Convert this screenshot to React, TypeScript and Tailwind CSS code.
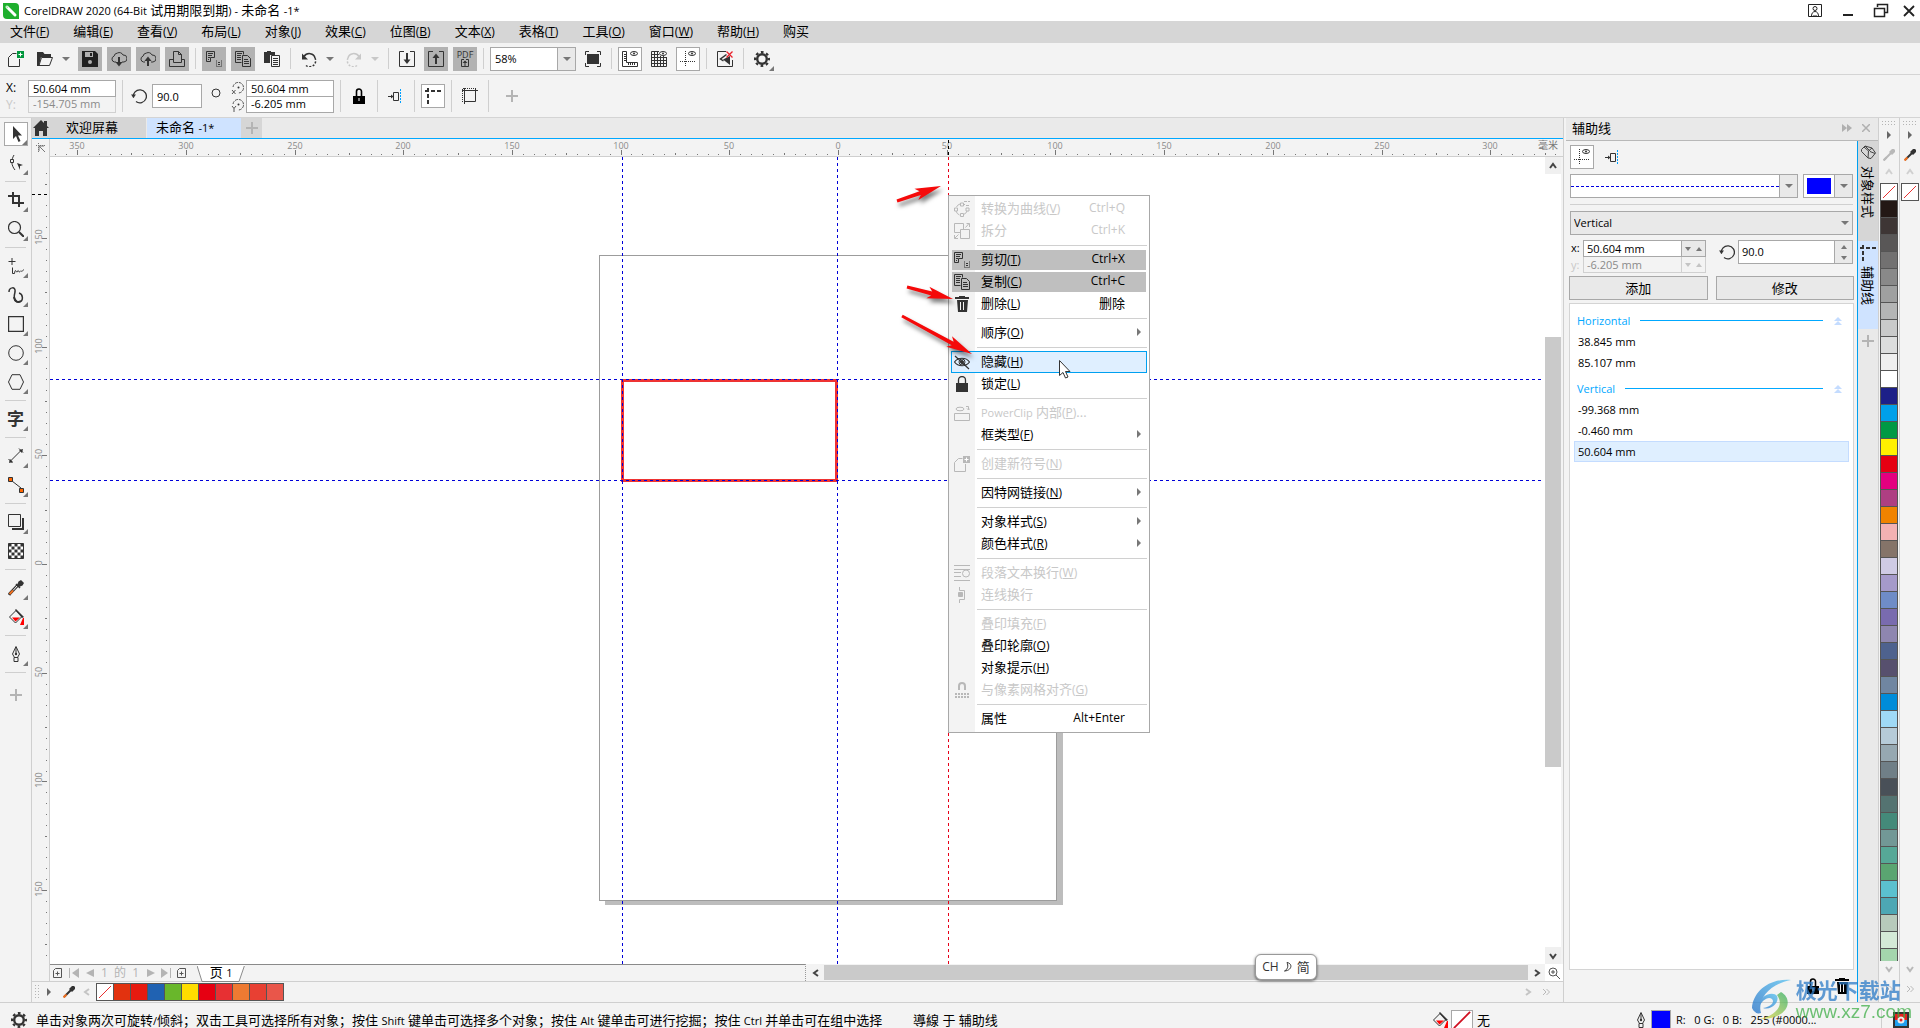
import React from "react";

type Kids = { children?: React.ReactNode };

/* ---------- text helpers ---------- */

/* Chinese runs keep the 13px size of the parent, Latin runs are set smaller beside them. */
function Mixed({ text }: { text: string }) {
  const parts = text.split(/([\x21-\x7e][\x20-\x7e]*[\x21-\x7e]|[\x21-\x7e])/);
  return (
    <span className="whitespace-pre">
      {parts.map((p, i) =>
        i % 2 === 1 ? (
          <span key={i} className="text-[11px]">
            {p}
          </span>
        ) : (
          p
        ),
      )}
    </span>
  );
}

function Mnemonic({ label, k }: { label: string; k?: string }) {
  return (
    <>
      <Mixed text={label} />
      {k && (
        <span className="text-[12px]">
          (<u className="underline-offset-1">{k}</u>)
        </span>
      )}
    </>
  );
}

/* ---------- icons ---------- */

function Ico({ children, s = 16, className = "" }: Kids & { s?: number; className?: string }) {
  return (
    <svg
      width={s}
      height={s}
      viewBox={`0 0 ${s} ${s}`}
      fill="none"
      stroke="currentColor"
      className={`shrink-0 ${className}`}
      aria-hidden="true"
    >
      {children}
    </svg>
  );
}

const Down = ({ className = "" }: { className?: string }) => (
  <svg width="8" height="4" viewBox="0 0 8 4" className={`shrink-0 ${className}`} aria-hidden="true">
    <path d="M0 0h8L4 4z" fill="currentColor" />
  </svg>
);
const Tri = ({ className = "" }: { className?: string }) => (
  <svg width="4" height="8" viewBox="0 0 4 8" className={`shrink-0 ${className}`} aria-hidden="true">
    <path d="M0 0l4 4l-4 4z" fill="currentColor" />
  </svg>
);
const Chevron = ({ d, className = "" }: { d: string; className?: string }) => (
  <svg width="8" height="8" viewBox="0 0 8 8" fill="none" stroke="currentColor" strokeWidth="2" className={`shrink-0 ${className}`} aria-hidden="true">
    <path d={d} />
  </svg>
);
const UP = "M1 6l3-4l3 4";
const DOWN = "M1 2l3 4l3-4";
const LEFT = "M6 1l-4 3l4 3";
const RIGHT = "M2 1l4 3l-4 3";

const Plus = () => (
  <Ico s={12} className="text-[#b4b4b4]">
    <path d="M6 0v12M0 6h12" strokeWidth="2" />
  </Ico>
);
const IcNew = () => (
  <Ico>
    <path d="M11.5 8v7.5h-11v-9l4-4h4" />
    <rect x="9" y="0" width="7" height="7" fill="#00963c" stroke="none" />
    <path d="M12.5 1.5v4M10.5 3.5h4" stroke="#fff" />
  </Ico>
);
const IcOpen = () => (
  <Ico>
    <path d="M0 1h6l1.500 2H14v3H4L2 15H0z" fill="currentColor" stroke="none" />
    <path d="M4.500 6.500h11l-3 8h-10.500z" />
  </Ico>
);
const IcSave = () => (
  <Ico>
    <path d="M0 0h13l3 3v13H0z" fill="#222" stroke="none" />
    <path d="M3 1h8v5H3z" fill="#b2b2b2" stroke="none" />
    <path d="M8 2h2v3H8z" fill="#222" stroke="none" />
    <circle cx="8" cy="11" r="2" fill="#b2b2b2" stroke="none" />
  </Ico>
);
const CLOUD = "M5 11H3.500A3 3 0 0 1 3 5.200A4 4 0 0 1 6.500 2A4 4 0 0 1 12 4A3.400 3.400 0 0 1 13 11h-2";
const IcCloudDown = () => (
  <Ico>
    <path d={CLOUD} />
    <path d="M8 6v6" strokeWidth="2" />
    <path d="M4.500 11h7L8 15.500z" fill="currentColor" stroke="none" />
  </Ico>
);
const IcCloudUp = () => (
  <Ico>
    <path d={CLOUD} />
    <path d="M8 9v6" strokeWidth="2" />
    <path d="M4.500 10h7L8 5.500z" fill="currentColor" stroke="none" />
  </Ico>
);
const IcPrint = () => (
  <Ico>
    <path d="M4.500 11.500V.5h5l3 3v8zM4 8.500H.5v7h15v-7H13" />
    <path d="M9.500 .5v3h3" />
  </Ico>
);
const IcCut = () => (
  <Ico>
    <path d="M.5 .5h8v6h-4v4h-4zM2 2.500h5M2 4.500h4M2 6.500h2M2 8.500h1" />
    <path d="M10.500 9.500v6h5v-6" strokeDasharray="1 1" />
    <path d="M12 11.500h2M12 13.500h2" />
  </Ico>
);
const IcCopy = () => (
  <Ico>
    <path d="M6.500 11.500h-6V.5h8v3M2 2.500h5M2 4.500h4M2 6.500h4M2 8.500h4" />
    <path d="M7.500 4.500h5l3 3v8h-8zM9 8.500h4M9 10.500h5M9 12.500h5" />
  </Ico>
);
const IcPaste = () => (
  <Ico>
    <path d="M0 1h3V0h4v1h4v3H6v8H0z" fill="#333" stroke="none" />
    <path d="M7.500 4.500h8v11h-8zM9 7.500h5M9 9.500h5M9 11.500h5M9 13.500h5" fill="#f3f3f3" />
  </Ico>
);
const UNDO = (
  <>
    <path d="M3 5.500C6 1 13 2 14 7" strokeWidth="1.500" />
    <path d="M14 7a6 6 0 0 1-9 7.500" strokeDasharray="2 1.500" strokeWidth="1.500" />
    <path d="M1 2.500v6h6z" fill="currentColor" stroke="none" />
  </>
);
const IcUndo = () => <Ico>{UNDO}</Ico>;
const IcRedo = () => (
  <Ico>
    <g transform="matrix(-1 0 0 1 16 0)">{UNDO}</g>
  </Ico>
);
const IcImport = () => (
  <Ico>
    <path d="M5 .5H.5v15h15V.5H11" />
    <path d="M8 2v8" strokeWidth="2" />
    <path d="M4.500 8.500h7L8 13z" fill="currentColor" stroke="none" />
  </Ico>
);
const IcExport = () => (
  <Ico>
    <path d="M5 .5H.5v15h15V.5H11" />
    <path d="M8 5v8" strokeWidth="2" />
    <path d="M4.500 7h7L8 2.500z" fill="currentColor" stroke="none" />
  </Ico>
);
const IcPdf = () => (
  <span className="flex flex-col items-center">
    <span className="text-[9px] leading-[9px]">PDF</span>
    <Ico s={8}>
      <path d="M3 .5H.5v7h7v-7H5M4 2v5" />
      <path d="M1.500 4h5L4 1.500z" fill="currentColor" stroke="none" />
    </Ico>
  </span>
);
const IcFull = () => (
  <Ico>
    <path d="M.5 4V.5H4M12 .5h3.500V4M15.500 12v3.500H12M4 15.500H.5V12" />
    <rect x="2" y="3" width="12" height="10" fill="currentColor" stroke="none" />
  </Ico>
);
const Eye = () => (
  <>
    <ellipse cx="12" cy="2.500" rx="3.500" ry="2" fill="#f9f9f9" />
    <circle cx="12" cy="2.500" r="1" fill="currentColor" stroke="none" />
  </>
);
const IcRuler = () => (
  <Ico>
    <path d="M.5 .5h4v11h11v4H.5zM2 3.500h2M2 5.500h2M2 7.500h2M2 9.500h2M6.500 12v2M8.500 12v2M10.500 12v2M12.500 12v2" />
    <Eye />
  </Ico>
);
const IcGrid = () => (
  <Ico>
    <path d="M.5 .5v15h15V6M.5 .5H8M.5 3.500H8M.5 6.500h15M.5 9.500h15M.5 12.500h15M3.500 .5v15M6.500 .5v15M9.500 5v11M12.500 5v11" />
    <Eye />
  </Ico>
);
const IcGuides = () => (
  <Ico>
    <path d="M5.500 0v16M0 10.500h16" strokeDasharray="1 1" />
    <Eye />
  </Ico>
);
const IcLaunch = () => (
  <Ico>
    <path d="M9 .5H.5v15h15V9" />
    <path d="M9.500 3.500L3.500 8l3 2" strokeWidth="1.500" />
    <path d="M6 8.500L13 5v9z" fill="currentColor" stroke="none" />
    <path d="M9.500 .5l6 6M15.500 .5l-6 6" stroke="#e8202a" strokeWidth="1.300" />
  </Ico>
);
const IcGear = () => (
  <Ico>
    <circle cx="8" cy="8" r="4.800" strokeWidth="2.400" />
    <circle cx="8" cy="8" r="6.900" strokeWidth="2.200" strokeDasharray="2.700 2.720" strokeDashoffset="1.350" />
  </Ico>
);
const IcLock = () => (
  <Ico>
    <path d="M5.500 8V3.500a2.500 2.500 0 0 1 5 0V8" strokeWidth="1.600" />
    <rect x="2" y="8" width="12" height="8" fill="currentColor" stroke="none" />
    <path d="M8 10v3" stroke="#fff" />
  </Ico>
);
const IcTrash = () => (
  <Ico>
    <path d="M5 0h6v1h4v2H1V1h4zM3 4h11l-1 12H4z" fill="currentColor" stroke="none" />
    <path d="M6.500 6v8M9.500 6v8" stroke="#f3f3f3" />
  </Ico>
);
const IcDockGuide = () => (
  <Ico>
    <path d="M0 8.500h5M5.500 4.500h5v8h-5z" />
    <path d="M3 6.500L5.500 8.500L3 10.500z" fill="currentColor" stroke="none" />
    <path d="M12.500 1v15" stroke="#00a0ff" strokeDasharray="2 1" />
  </Ico>
);
const IcSnapGuides = () => (
  <Ico>
    <path d="M3 0v16M0 3h16" strokeWidth="2" strokeDasharray="4 2" />
  </Ico>
);
const IcTransform = () => (
  <Ico>
    <path d="M2.500 2.500h11v11h-11z" />
    <path d="M.5 4V.5H14M.5 5v9" strokeDasharray="1 1" />
    <path d="M0 2.500h3M2.500 0v3M13 2.500h3M2.500 13v3M13.500 0v3" />
  </Ico>
);
const IcRotate = () => (
  <Ico>
    <path d="M2.500 9.500A6.500 6.500 0 1 1 5 13.500" strokeWidth="1.300" />
    <path d="M0 6.500h5L2.500 10z" fill="currentColor" stroke="none" />
  </Ico>
);
const IcCenter = ({ axis }: { axis: string }) => (
  <svg width="14" height="14" viewBox="0 0 14 14" fill="none" stroke="#555" className="shrink-0" aria-hidden="true">
    <path d="M2 6A5.300 5.300 0 1 1 7 12" strokeDasharray="3 1" />
    <circle cx="7.500" cy="6.500" r="1" fill="#333" stroke="none" />
    {axis === "x" ? <path d="M1 9l3.500 4M4.500 9L1 13" /> : <path d="M1 8l2 2.500L5 8M3 10.500V14" />}
  </svg>
);
const IcDropper = () => (
  <Ico>
    <path d="M10 5L2 13.500L1 15" strokeWidth="3" />
    <path d="M9.500 5.500L5 10.500" stroke="#fff" />
    <path d="M5 10.500L1.500 14" stroke="#f07020" strokeWidth="2" />
    <path d="M8 4l4 4" strokeWidth="1.500" />
    <path d="M9 5l1.500-3.500L13 0l3 3l-1.500 2.500L11 7z" fill="currentColor" stroke="none" />
  </Ico>
);
const IcSmallDropper = ({ tip = "#f07020" }: { tip?: string }) => (
  <Ico s={12}>
    <path d="M8 4L1 11" strokeWidth="2" />
    <path d="M3.500 8.500L.5 11.500" stroke={tip} strokeWidth="2" />
    <path d="M6 3l3 3l3-3V1L11 0H9z" fill="currentColor" stroke="none" />
  </Ico>
);
const IcBucket = () => (
  <Ico>
    <path d="M1.500 8L8 1.500L14 7.500L7.500 14z" />
    <path d="M7 1l1-1l8 8l-2 1z" fill="currentColor" stroke="none" />
    <path d="M4 8.500h8l-4.500 4zM12 16l3-7h1v7z" fill="#f00" stroke="none" />
  </Ico>
);
const IcPen = () => (
  <Ico>
    <path d="M8 .5L4.500 8l2 3.500h3l2-3.500zM8 1v7M6 11.500h4v4H6z" />
    <circle cx="8" cy="8" r="1.200" fill="currentColor" stroke="none" />
  </Ico>
);
const IcDoc = () => (
  <Ico s={10}>
    <path d="M2.500 .5h6v9h-8v-7zM2.500 5.500h4M4.500 3.500v4" />
  </Ico>
);

/* ---------- top bars ---------- */

function TitleBar() {
  return (
    <header className="flex h-[21px] shrink-0 items-center bg-white pl-[3px] pr-1">
      <svg width="16" height="16" viewBox="0 0 16 16" className="mr-[5px]" aria-hidden="true">
        <path d="M0 0h12a4 4 0 0 1 4 4v12H4a4 4 0 0 1-4-4z" fill="#1faf2e" />
        <path d="M4 4l8 8" stroke="#fff" strokeWidth="3" strokeLinecap="round" />
        <path d="M3 3l2.500 1L4 5.500z" fill="#9be29f" />
      </svg>
      <h1>
        <Mixed text="CorelDRAW 2020 (64-Bit 试用期限到期) - 未命名 -1*" />
      </h1>
      <div className="ml-auto flex items-center gap-[17px] text-[#222]">
        <button aria-label="用户">
          <Ico>
            <path d="M1.500 1.500h13v12h-13z" />
            <circle cx="8" cy="5.500" r="2" />
            <path d="M4.500 13c0-6 7-6 7 0M6 13h4" />
          </Ico>
        </button>
        <button aria-label="最小化">
          <Ico>
            <path d="M3 12h10" strokeWidth="2" />
          </Ico>
        </button>
        <button aria-label="还原">
          <Ico>
            <path d="M4.500 4V1.500h10v8H12M1.500 5.500h10v8h-10z" strokeWidth="1.500" />
          </Ico>
        </button>
        <button aria-label="关闭" className="-ml-1">
          <Ico s={14}>
            <path d="M2 2l10 10M12 2L2 12" strokeWidth="1.800" />
          </Ico>
        </button>
      </div>
    </header>
  );
}

const MENUS: [string, string?][] = [
  ["文件", "F"], ["编辑", "E"], ["查看", "V"], ["布局", "L"], ["对象", "J"], ["效果", "C"], ["位图", "B"],
  ["文本", "X"], ["表格", "T"], ["工具", "O"], ["窗口", "W"], ["帮助", "H"], ["购买"],
];

function MenuBar() {
  return (
    <nav className="flex h-[22px] shrink-0 items-center gap-6 bg-[#d6d6d6] pb-[2px] pl-[10px]">
      {MENUS.map(([l, k]) => (
        <button key={l} className="whitespace-nowrap">
          <Mnemonic label={l} k={k} />
        </button>
      ))}
    </nav>
  );
}

const LOOK = {
  plain: "",
  gray: "bg-[#b2b2b2]",
  box: "border border-[#a8a8a8] bg-white",
};

function TB({ label, look = "plain", className = "", children }: Kids & { label: string; look?: keyof typeof LOOK; className?: string }) {
  return (
    <button aria-label={label} className={`flex size-6 shrink-0 items-center justify-center ${LOOK[look]} ${className}`}>
      {children}
    </button>
  );
}
const Sep = () => (
  <div className="flex w-[3px] shrink-0 justify-center self-stretch py-[5px]">
    <div className="w-px bg-[#cfcfcf]" />
  </div>
);
const More = ({ label, className = "text-[#777]" }: { label: string; className?: string }) => (
  <button aria-label={label} className={`flex h-6 w-[11px] shrink-0 items-center ${className}`}>
    <Down />
  </button>
);
const Corner = () => <span className="absolute bottom-0 right-0 border-b-[5px] border-l-[5px] border-b-[#777] border-l-transparent" />;

function Toolbar() {
  return (
    <div className="flex h-8 shrink-0 items-center gap-[5px] border-b border-[#d4d4d4] pl-1 text-[#333]">
      <TB label="新建"><IcNew /></TB>
      <TB label="打开"><IcOpen /></TB>
      <More label="最近的文件" />
      <TB label="保存" look="gray"><IcSave /></TB>
      <TB label="从云下载" look="gray"><IcCloudDown /></TB>
      <TB label="上传到云" look="gray"><IcCloudUp /></TB>
      <TB label="打印" look="gray"><IcPrint /></TB>
      <Sep />
      <TB label="剪切" look="gray"><IcCut /></TB>
      <TB label="复制" look="gray"><IcCopy /></TB>
      <TB label="粘贴"><IcPaste /></TB>
      <Sep />
      <TB label="撤消"><IcUndo /></TB>
      <More label="撤消列表" />
      <TB label="重做" className="text-[#c8c8c8]"><IcRedo /></TB>
      <More label="重做列表" className="text-[#c8c8c8]" />
      <Sep />
      <TB label="导入"><IcImport /></TB>
      <TB label="导出" look="gray"><IcExport /></TB>
      <TB label="发布为 PDF" look="gray"><IcPdf /></TB>
      <Sep />
      <div className="relative flex h-6 w-[86px] shrink-0 border border-[#a8a8a8] bg-white">
        <select aria-label="缩放级别" className="w-full appearance-none pl-1 text-[11px] text-black">
          <option>58%</option>
        </select>
        <span className="pointer-events-none absolute inset-y-0 right-0 flex w-[18px] items-center justify-center border-l border-[#a8a8a8] bg-[#e9e9e9] text-[#777]">
          <Down />
        </span>
      </div>
      <TB label="全屏预览"><IcFull /></TB>
      <Sep />
      <TB label="显示标尺" look="box"><IcRuler /></TB>
      <TB label="显示网格"><IcGrid /></TB>
      <TB label="显示辅助线" look="box"><IcGuides /></TB>
      <Sep />
      <TB label="贴齐关闭"><IcLaunch /></TB>
      <Sep />
      <TB label="选项" className="relative"><IcGear /><Corner /></TB>
    </div>
  );
}

const FIELD = "w-full border border-[#a8a8a8] bg-white pl-1 text-[11px] text-black disabled:border-[#d0d0d0] disabled:bg-[#f3f3f3] disabled:text-[#8a8a8a]";

function PropertyBar() {
  return (
    <div className="flex h-[43px] shrink-0 items-center gap-[5px] border-b border-[#d4d4d4] pl-[6px] text-[#333]">
      <div className="grid grid-cols-[22px_88px] text-[12px]">
        <label htmlFor="px" className="text-black">X:</label>
        <input id="px" className={`${FIELD} h-[17px]`} defaultValue="50.604 mm" />
        <label htmlFor="py" className="text-[#c8c8c8]">Y:</label>
        <input id="py" disabled className={`${FIELD} h-4 border-t-0`} defaultValue="-154.705 mm" />
      </div>
      <Sep />
      <label htmlFor="pa" className="ml-[2px]"><IcRotate /></label>
      <input id="pa" aria-label="旋转角度" className={`${FIELD} h-6 max-w-[50px]`} defaultValue="90.0" />
      <Ico className="mb-[6px] ml-[3px]"><circle cx="6" cy="8" r="4" /></Ico>
      <div className="grid grid-cols-[15px_88px] items-center">
        <label htmlFor="cx"><IcCenter axis="x" /></label>
        <input id="cx" aria-label="旋转中心 X" className={`${FIELD} h-[17px]`} defaultValue="50.604 mm" />
        <label htmlFor="cy"><IcCenter axis="y" /></label>
        <input id="cy" aria-label="旋转中心 Y" className={`${FIELD} h-4 border-t-0`} defaultValue="-6.205 mm" />
      </div>
      <Sep />
      <TB label="锁定辅助线" className="text-black"><IcLock /></TB>
      <Sep />
      <TB label="转换为辅助线"><IcDockGuide /></TB>
      <Sep />
      <TB label="贴齐辅助线" look="box"><IcSnapGuides /></TB>
      <Sep />
      <TB label="边界框"><IcTransform /></TB>
      <Sep />
      <TB label="快速自定义" className="ml-[5px]"><Plus /></TB>
    </div>
  );
}

/* ---------- toolbox ---------- */

const CHECKS = [0, 1, 2, 3, 4].flatMap((r) => [0, 1, 2, 3, 4].filter((c) => (r + c) % 2 === 0).map((c) => [r, c]));

const TOOLS: ([string, React.ReactNode] | null)[] = [
  ["选择", <Ico key="i"><path d="M5 0v13l3-3l2.500 6l2-1L10 9.500h4z" fill="currentColor" stroke="none" /></Ico>],
  ["形状", <Ico key="i"><path d="M6 0C3 5 3 10 7 15" /><path d="M2.500 4.500h3v3h-3z" fill="#f3f3f3" /><path d="M9 8l6 2l-3 1v4z" fill="currentColor" stroke="none" /></Ico>],
  null,
  ["裁剪", <Ico key="i"><path d="M0 4h11v11M5 0v11h11" strokeWidth="2" /></Ico>],
  ["缩放", <Ico key="i"><circle cx="6.500" cy="6.500" r="6" strokeWidth="1.200" /><path d="M11 11l5 5" strokeWidth="2" /></Ico>],
  null,
  ["手绘", <Ico key="i"><path d="M4 0v7M.5 3.500h7M4.500 9.500v6h2c1-7 2 1 3-2s1 2 2.500 0s1.500 2 3.500-2" /></Ico>],
  ["艺术笔", <Ico key="i"><path d="M1 5C1 0 8-1 7 5C6 9 5 15 11 15C16 14 15 7 11 6" strokeWidth="1.500" /><path d="M6 10c1 5 4 6 7 4" strokeWidth="2" /></Ico>],
  ["矩形", <Ico key="i"><path d="M.5 .5h15v15H.5z" strokeWidth="1.400" /></Ico>],
  ["椭圆形", <Ico key="i"><circle cx="8" cy="8" r="7.300" /></Ico>],
  ["多边形", <Ico key="i"><path d="M4 .7h8L15.500 8L12 15.300H4L.5 8z" /></Ico>],
  null,
  ["文本", <span key="i" className="text-[17px] font-bold leading-4">字</span>],
  null,
  ["平行度量", <Ico key="i"><path d="M2 13.500L13.500 2M.5 11l4 4M11 .5l4 4" /><path d="M1 15l1-4l3 3zM15 1l-1 4l-3-3z" fill="currentColor" stroke="none" /></Ico>],
  ["连接器", <Ico key="i"><path d="M4 4l9 7" /><path d="M.5 .5h4v4h-4zM11.500 11.500h4v4h-4z" fill="#f60" /></Ico>],
  null,
  ["阴影", <Ico key="i"><path d="M.5 .5h12v12H.5z" /><path d="M15 4v11H4" strokeWidth="2" /></Ico>],
  ["透明度", <Ico key="i"><path d="M.5 .5h15v15H.5z" fill="#fff" /><g stroke="none" fill="currentColor">{CHECKS.map(([r, c]) => <rect key={`${r}${c}`} x={c * 3 + 0.5} y={r * 3 + 0.5} width="3" height="3" />)}</g></Ico>],
  null,
  ["颜色滴管", <IcDropper key="i" />],
  ["交互式填充", <IcBucket key="i" />],
  null,
  ["轮廓笔", <IcPen key="i" />],
  null,
];

function Toolbox() {
  return (
    <aside className="flex w-8 shrink-0 flex-col items-center border-r border-[#cfcfcf] pt-px text-[#333]">
      {TOOLS.map((t, i) =>
        t ? (
          <div key={i} className="flex h-[29px] items-center">
            <TB label={t[0]} look={i === 0 ? "box" : "plain"} className="relative">
              {t[1]}
              {t[0] !== "透明度" && <Corner />}
            </TB>
          </div>
        ) : (
          <div key={i} className="flex h-2 w-full items-center px-[5px]">
            <div className="h-px w-full bg-[#cfcfcf]" />
          </div>
        ),
      )}
      <TB label="自定义" className="mt-[7px]"><Plus /></TB>
    </aside>
  );
}

/* ---------- document window ---------- */

const STEP = 10.87;
const range = (a: number, b: number) => Array.from({ length: b - a + 1 }, (_, i) => a + i);
const tickLen = (n: number) => (n % 10 === 0 ? 5 : n % 5 === 0 ? 2 : 1);

function HRuler() {
  return (
    <svg width="1512" height="18" className="block max-w-none" aria-hidden="true">
      <g fill="#777" shapeRendering="crispEdges">
        {range(-72, 66).map((n) => (
          <rect key={n} x={Math.round(788 + n * STEP)} y={16 - tickLen(n)} width="1" height={tickLen(n)} />
        ))}
      </g>
      <g fill="#8a8a8a" fontSize="9" textAnchor="middle">
        {range(-7, 6).map((n) => (
          <text key={n} x={Math.round(788 + n * 108.7)} y="10">{Math.abs(n * 50)}</text>
        ))}
      </g>
      <text x="1488" y="10" fill="#777" fontSize="10">毫米</text>
      <path d="M898.500 1v16" stroke="#000" strokeDasharray="3 3" />
    </svg>
  );
}

function VRuler() {
  return (
    <svg width="17" height="824" className="block" aria-hidden="true">
      <g fill="#777" shapeRendering="crispEdges">
        {range(-36, 36).map((n) => (
          <rect key={n} x={15 - tickLen(n)} y={Math.round(407 + n * STEP)} width={tickLen(n)} height="1" />
        ))}
      </g>
      <g fill="#8a8a8a" fontSize="9" textAnchor="middle">
        {range(-3, 3).map((n) => (
          <text key={n} transform={`translate(10 ${Math.round(406 + n * 108.7)}) rotate(-90)`}>{Math.abs(n * 50)}</text>
        ))}
      </g>
      <path d="M0 37.500h16" stroke="#000" strokeDasharray="3 3" />
    </svg>
  );
}

function Artboard() {
  return (
    <svg className="absolute inset-0 size-full" fill="none" shapeRendering="crispEdges" aria-hidden="true">
      <rect x="555" y="103" width="458" height="645" fill="#bdbdbd" />
      <rect x="549.500" y="98.500" width="457" height="645" fill="#fff" stroke="#9c9c9c" />
      <path d="M572.500 223.500h214v100h-214z" stroke="#ee3333" strokeWidth="3" />
      <path d="M0 222.500h1493M0 323.500h1493M572.500 0v807M787.500 0v807" stroke="#0000d8" strokeDasharray="3 3" />
      <path d="M898.500 0v807" stroke="#e80018" strokeDasharray="3 3" />
    </svg>
  );
}

type Item = { t: string; k?: string; s?: string; off?: boolean; sub?: boolean; look?: "gray" | "hot"; icon?: React.ReactNode };
const CONTEXT: (Item | null)[] = [
  { t: "转换为曲线", k: "V", s: "Ctrl+Q", off: true, icon: <Ico><path d="M2.500 6A5.500 5.500 0 0 1 6 3M10 3.500h1M13 10a5 5 0 0 1-3.500 3.500M2 10a6 6 0 0 0 3.500 4M10 .5h3M14 .5h2M12 4.500h3" /><path d="M6.500 2h3v3h-3zM.5 7h3v3h-3zM12 7h3v3h-3zM6.500 12.500h3v3h-3z" /></Ico> },
  { t: "拆分", s: "Ctrl+K", off: true, icon: <Ico><path d="M.5 .5h9v9h-9z" /><path d="M6.500 6.500h9v9h-9z" fill="#f3f3f3" /><path d="M11.500 4.500l3.500-4M12.500 .5h3V4M4.500 11.500l-4 4M.5 12v3.500H4" /></Ico> },
  null,
  { t: "剪切", k: "T", s: "Ctrl+X", look: "gray", icon: <IcCut /> },
  { t: "复制", k: "C", s: "Ctrl+C", look: "gray", icon: <IcCopy /> },
  { t: "删除", k: "L", s: "删除", icon: <IcTrash /> },
  null,
  { t: "顺序", k: "O", sub: true },
  null,
  { t: "隐藏", k: "H", look: "hot", icon: <Ico><path d="M.5 8C4 3 12 3 15.500 8C12 13 4 13 .5 8zM1 2l14 13" strokeWidth="1.200" /><circle cx="8" cy="8" r="3" /><circle cx="8" cy="8" r="1.500" fill="currentColor" /></Ico> },
  { t: "锁定", k: "L", icon: <Ico><path d="M4.500 8V4a3.500 3.500 0 0 1 7 0v4" strokeWidth="1.300" /><path d="M2 7h12v9H2z" fill="currentColor" stroke="none" /></Ico> },
  null,
  { t: "PowerClip 内部", k: "P", off: true, icon: <Ico><ellipse cx="6" cy="4" rx="4" ry="1.800" /><path d="M.5 8.500h15v7H.5zM12 1.500h2.500v3M13 3.500l1.500 1.500l1.500-1.500" /></Ico> },
  { t: "框类型", k: "F", sub: true },
  null,
  { t: "创建新符号", k: "N", off: true, icon: <Ico><path d="M11.500 8v7.500h-11v-9l4-4h4" /><path d="M9 0h7v7H9z" fill="currentColor" stroke="none" /><path d="M12.500 1.500v4M10.500 3.500h4" stroke="#fff" /></Ico> },
  null,
  { t: "因特网链接", k: "N", sub: true },
  null,
  { t: "对象样式", k: "S", sub: true },
  { t: "颜色样式", k: "R", sub: true },
  null,
  { t: "段落文本换行", k: "W", off: true, icon: <Ico><path d="M0 .5h16M0 4.500h16M0 7.500h7M0 11.500h7M0 15.500h16" /><circle cx="12" cy="8.500" r="3.500" fill="#f3f3f3" /></Ico> },
  { t: "连线换行", off: true, icon: <Ico><path d="M5.500 0v3.500h5v9h-5V16" /><path d="M4.500 5.500h4v4h-4z" fill="currentColor" /></Ico> },
  null,
  { t: "叠印填充", k: "F", off: true },
  { t: "叠印轮廓", k: "O" },
  { t: "对象提示", k: "H" },
  { t: "与像素网格对齐", k: "G", off: true, icon: <Ico><path d="M5 8V4a3 3 0 0 1 6 0v4" strokeWidth="2" /><path d="M1 12h14M1 15h14" strokeWidth="2" strokeDasharray="2 1" /></Ico> },
  null,
  { t: "属性", s: "Alt+Enter" },
];

const ROW = {
  none: "border-transparent",
  gray: "border-transparent bg-[#bfbfbf] bg-clip-padding",
  hot: "border-[#00a0f0] bg-[#dfefff]",
};

function ContextMenu() {
  return (
    <div role="menu" className="absolute left-[898px] top-[38px] w-[202px] border border-[#a8a8a8] bg-[linear-gradient(90deg,#f3f3f3_26px,#ffffff_26px)] p-[2px]">
      {CONTEXT.map((m, i) =>
        m ? (
          <button
            key={i}
            role="menuitem"
            disabled={m.off}
            className={`flex h-[22px] w-full items-center border pb-[2px] pl-[2px] pr-[5px] text-black disabled:text-[#c8c8c8] ${ROW[m.look ?? "none"]}`}
          >
            <span className={`mr-[11px] flex w-4 shrink-0 pt-px ${m.off ? "text-[#b8b8b8]" : "text-[#333]"}`}>{m.icon}</span>
            <span className="whitespace-pre">
              <Mnemonic label={m.t} k={m.k} />
              {m.t.startsWith("PowerClip") && "..."}
            </span>
            {m.s && <span className={`ml-auto mr-4 ${m.s === "删除" ? "" : "text-[12px]"}`}>{m.s}</span>}
            {m.sub && <Tri className="ml-auto text-[#777]" />}
          </button>
        ) : (
          <div key={i} className="flex h-[7px] items-center pl-[26px]">
            <div className="h-px w-full bg-[#d0d0d0]" />
          </div>
        ),
      )}
    </div>
  );
}

const ARROWS = [
  [847, 44, 891, 29],
  [857, 130, 903, 142],
  [852, 159, 922, 197],
];

function Annotations() {
  return (
    <svg className="pointer-events-none absolute inset-0 size-full" aria-hidden="true">
      <g className="drop-shadow-[2px_4px_2px_rgba(0,0,0,0.5)]">
        {ARROWS.map(([x1, y1, x2, y2]) => {
          const l = Math.hypot(x2 - x1, y2 - y1);
          const a = (Math.atan2(y2 - y1, x2 - x1) * 180) / Math.PI;
          return (
            <path
              key={y1}
              transform={`translate(${x1} ${y1}) rotate(${a})`}
              d={`M0 -1.500L${l - 22} -2L${l - 26} -6L${l} 0L${l - 26} 6L${l - 22} 2L0 1.500z`}
              fill="#f50a0a"
            />
          );
        })}
      </g>
      <path d="M1009.500 203.500v15l3.500-3l2.500 5.500l2.500-1l-2.500-5.500h4.500z" fill="#fff" stroke="#333" />
    </svg>
  );
}

function NoColor() {
  return (
    <svg viewBox="0 0 16 16" className="block size-4 bg-white" aria-hidden="true">
      <path d="M2 14L14 2" stroke="#e83030" />
    </svg>
  );
}

const DOC_COLORS = [
  "bg-[#e2320f]", "bg-[#e71a10]", "bg-[#2062b2]", "bg-[#69b72b]", "bg-[#ffdd00]", "bg-[#e60012]",
  "bg-[#e73033]", "bg-[#ee7a32]", "bg-[#e84033]", "bg-[#e9564a]",
];

function DocumentWindow() {
  return (
    <main className="relative flex min-w-0 flex-1 flex-col">
      <div className="flex h-5 shrink-0 items-center bg-[#eaeaea]">
        <button className="flex h-full w-[114px] items-center bg-[#d6d6d6] pb-[2px] pl-px">
          <Ico className="mr-[17px] mt-[2px] text-[#333]"><path d="M8 0L0 8h2v8h4v-5h4v5h4V8h2L14 6V1h-3v2z" fill="currentColor" stroke="none" /></Ico>
          欢迎屏幕
        </button>
        <button className="ml-px flex h-full w-[94px] items-center bg-[#cfe3ff] pb-[2px] pl-[9px]"><Mixed text="未命名 -1*" /></button>
        <button aria-label="新建文档" className="flex h-full w-[21px] items-center justify-center bg-[#d6d6d6]"><Plus /></button>
      </div>
      <div className="h-px shrink-0 bg-[#00a8ff]" />

      <div className="flex min-h-0 flex-1">
        <div className="w-[18px] shrink-0 overflow-hidden border-r border-[#cfcfcf]">
          <div className="flex h-[18px] items-center pl-1 text-[#777]">
            <Ico s={10}><path d="M0 2.500h10M2.500 0v10" strokeDasharray="1 1" /><path d="M3 3l6 6M3 8V3h5" /></Ico>
          </div>
          <VRuler />
        </div>
        <div className="flex min-w-0 flex-1 flex-col">
          <div className="h-[18px] shrink-0 overflow-hidden border-b border-[#cfcfcf]"><HRuler /></div>
          <div className="flex min-h-0 flex-1">
            <div className="relative min-w-0 flex-1 overflow-hidden bg-white">
              <Artboard />
              <ContextMenu />
              <Annotations />
            </div>
            <div className="mr-[2px] flex w-4 shrink-0 flex-col bg-white">
              <button aria-label="向上滚动" className="flex h-[17px] shrink-0 items-center justify-center bg-[#f0f0f0] text-[#444]"><Chevron d={UP} /></button>
              <div className="h-[163px] shrink-0" />
              <div className="h-[430px] shrink-0 bg-[#cacaca]" />
              <button aria-label="向下滚动" className="mt-auto flex h-[17px] shrink-0 items-center justify-center bg-[#f0f0f0] text-[#444]"><Chevron d={DOWN} /></button>
            </div>
          </div>
          <div className="flex h-[17px] shrink-0">
            <div className="flex h-full w-[755px] shrink-0 items-center border-t border-[#8a8a8a] pl-[3px] text-[#b4b4b4]">
              <button aria-label="添加页" className="text-[#555]"><IcDoc /></button>
              <button aria-label="第一页" className="ml-[6px]"><Ico s={10}><path d="M.5 0v10" /><path d="M10 0v10L3 5z" fill="currentColor" stroke="none" /></Ico></button>
              <button aria-label="上一页" className="ml-[7px]"><Ico s={8}><path d="M8 0v8L0 4z" fill="currentColor" stroke="none" /></Ico></button>
              <span className="ml-[7px] whitespace-pre text-[12px]">1  的  1</span>
              <button aria-label="下一页" className="ml-2"><Ico s={8}><path d="M0 0v8l8-4z" fill="currentColor" stroke="none" /></Ico></button>
              <button aria-label="最后一页" className="ml-[6px]"><Ico s={10}><path d="M9.500 0v10" /><path d="M0 0v10l7-5z" fill="currentColor" stroke="none" /></Ico></button>
              <button aria-label="在后面添加页" className="ml-[6px] text-[#555]"><IcDoc /></button>
              <button className="relative ml-[10px] flex h-[17px] w-12 items-center justify-center pb-[2px] text-black">
                <svg viewBox="0 0 48 17" className="absolute inset-0" aria-hidden="true"><path d="M0 .5L5 16.500H42L47.500 .5" fill="#fff" stroke="#8a8a8a" /><path d="M0 0h48" stroke="#fff" strokeWidth="2" /></svg>
                <span className="relative"><Mixed text="页 1" /></span>
              </button>
            </div>
            <div className="w-[3px] shrink-0 border-l border-dotted border-[#999]" />
            <button aria-label="向左滚动" className="flex w-4 shrink-0 items-center justify-center text-[#444]"><Chevron d={LEFT} /></button>
            <div className="my-px min-w-0 flex-1 bg-[#cacaca]" />
            <button aria-label="向右滚动" className="flex w-[17px] shrink-0 items-center justify-center text-[#444]"><Chevron d={RIGHT} /></button>
            <button aria-label="导航器" className="flex w-[18px] shrink-0 items-center justify-center bg-white text-[#555]"><Ico s={12}><circle cx="5" cy="5" r="4" /><path d="M8 8l4 4M5 3v4M3 5h4" /></Ico></button>
          </div>
        </div>
      </div>

      <div className="flex h-[21px] shrink-0 items-center border-t border-[#cfcfcf] pl-[2px] text-[#666]">
        <div className="mr-2 h-4 w-[5px] bg-[radial-gradient(circle,#b4b4b4_1px,transparent_1px)] bg-[size:3px_3px]" />
        <button aria-label="调色板菜单"><Tri /></button>
        <button aria-label="滴管" className="ml-3 text-[#333]"><IcSmallDropper /></button>
        <button aria-label="上一组颜色" className="ml-2 text-[#c4c4c4]"><Chevron d={LEFT} /></button>
        <div className="ml-[5px] flex gap-px border border-[#555] bg-[#555]">
          <button aria-label="无颜色"><NoColor /></button>
          {DOC_COLORS.map((c) => (
            <button key={c} aria-label="文档颜色" className={`size-4 ${c}`} />
          ))}
        </div>
        <button aria-label="下一组颜色" className="ml-auto text-[#c4c4c4]"><Chevron d={RIGHT} /></button>
        <button aria-label="展开" className="ml-[10px] mr-[13px] flex text-[#b8b8b8]"><Ico s={8}><path d="M1 1l3 3l-3 3M4.500 1l3 3l-3 3" /></Ico></button>
      </div>

      <div className="absolute bottom-[22px] right-[246px] flex h-[26px] w-[62px] items-center justify-center gap-1 rounded-md border border-[#999] bg-white text-[#333] shadow-[0_1px_3px_rgba(0,0,0,0.6)]">
        <span className="text-[12px]">CH</span>
        <Ico s={10}><path d="M4 .5c6 1 5 8-2.500 8.500C5 7 5.500 4 4 .5z" /></Ico>
        <span>简</span>
      </div>
    </main>
  );
}

/* ---------- docker ---------- */

function Group({ title, rows, selected }: { title: string; rows: string[]; selected?: string }) {
  return (
    <section className="mb-[5px]">
      <h3 className="flex h-[21px] items-center pl-[3px] text-[11px] text-[#00a8ff]">
        {title}
        <span className="ml-[10px] mr-[11px] h-px flex-1 bg-[#00a8ff]" />
        <button aria-label="折叠" className="mr-[7px] text-[#c4dcff]"><Ico s={8}><path d="M4 0l4 4H0zM4 4l4 4H0z" fill="currentColor" stroke="none" /></Ico></button>
      </h3>
      <ul>
        {rows.map((r) => (
          <li key={r} className={`flex h-[21px] items-center border pl-[3px] text-[11px] ${r === selected ? "border-[#c4dcff] bg-[#dfefff]" : "border-transparent"}`}>{r}</li>
        ))}
      </ul>
    </section>
  );
}

function Spin({ off }: { off?: boolean }) {
  return (
    <span className={`flex w-6 shrink-0 items-center justify-around border border-l-0 ${off ? "border-t-0 border-[#d0d0d0] text-[#c4c4c4]" : "border-[#a8a8a8] bg-[#e9e9e9] text-[#777]"}`}>
      <Ico s={6}><path d="M0 1h6L3 5z" fill="currentColor" stroke="none" /></Ico>
      <Ico s={6}><path d="M0 5h6L3 1z" fill="currentColor" stroke="none" /></Ico>
    </span>
  );
}

const BTN = "flex h-6 flex-1 items-center justify-center border border-[#a8a8a8] bg-[#e9e9e9]";

function Docker() {
  return (
    <aside className="flex w-[315px] shrink-0 flex-col border-l border-[#cfcfcf] pl-[2px]">
      <div className="flex h-[23px] shrink-0 items-center border-b border-[#b8b8b8] bg-[#e9e9e9] pb-[2px] pl-[6px] pr-2 text-[#b0b0b0]">
        <h2 className="text-black">辅助线</h2>
        <button aria-label="折叠泊坞窗" className="ml-auto mr-[10px]"><Ico s={10}><path d="M0 1l5 4l-5 4zM5 1l5 4l-5 4z" fill="currentColor" stroke="none" /></Ico></button>
        <button aria-label="关闭泊坞窗"><Ico s={8}><path d="M0 0l8 8M8 0L0 8" strokeWidth="1.500" /></Ico></button>
      </div>
      <div className="flex min-h-0 flex-1">
        <div className="flex min-w-0 flex-1 flex-col px-[3px] pt-1 text-[#333]">
          <div className="flex gap-[7px] px-px">
            <TB label="显示辅助线" look="box"><IcGuides /></TB>
            <TB label="辅助线对齐"><IcDockGuide /></TB>
          </div>
          <div className="mt-[5px] flex gap-[5px] px-px">
            <button aria-label="线条样式" className="flex h-6 min-w-0 flex-1 items-center border border-[#a8a8a8] bg-white">
              <span className="h-px flex-1 bg-[repeating-linear-gradient(90deg,#0000e0_0_3px,transparent_3px_5px)]" />
              <span className="flex h-full w-[18px] items-center justify-center border-l border-[#a8a8a8] bg-[#e9e9e9] text-[#777]"><Down /></span>
            </button>
            <button aria-label="线条颜色" className="flex h-6 w-[50px] items-center border border-[#a8a8a8] bg-white pl-[3px]">
              <span className="mr-auto h-4 w-6 bg-[#0000ff]" />
              <span className="flex h-full w-[18px] items-center justify-center border-l border-[#a8a8a8] bg-[#e9e9e9] text-[#777]"><Down /></span>
            </button>
          </div>
          <div className="mx-px mt-[6px] h-px bg-[#d0d0d0]" />
          <div className="relative mx-px mt-[6px] flex h-6 items-center border border-[#a8a8a8] bg-[#e9e9e9]">
            <select aria-label="辅助线类型" className="w-full appearance-none pl-[3px] text-[11px] text-black"><option>Vertical</option></select>
            <Down className="pointer-events-none absolute right-[3px] text-[#777]" />
          </div>
          <div className="mt-[5px] flex pl-[2px] pr-px">
            <div className="grid w-[135px] shrink-0 grid-cols-[12px_minmax(0,1fr)_24px]">
              <label htmlFor="gx" className="text-[11px] text-black">x:</label>
              <input id="gx" className={`${FIELD} h-[17px] pl-[3px]`} defaultValue="50.604 mm" />
              <Spin />
              <label htmlFor="gy" className="text-[11px] text-[#c8c8c8]">y:</label>
              <input id="gy" disabled className={`${FIELD} h-4 border-t-0 pl-[3px]`} defaultValue="-6.205 mm" />
              <Spin off />
            </div>
            <label htmlFor="ga" className="ml-[13px] mr-[3px] flex h-6 items-center"><IcRotate /></label>
            <div className="flex h-6 min-w-0 flex-1 border border-[#a8a8a8] bg-white">
              <input id="ga" aria-label="角度" className="min-w-0 flex-1 pl-[3px] text-[11px] text-black" defaultValue="90.0" />
              <span className="flex w-[18px] flex-col items-center justify-around border-l border-[#a8a8a8] bg-[#e9e9e9] text-[#777]">
                <Ico s={6}><path d="M0 5h6L3 1z" fill="currentColor" stroke="none" /></Ico>
                <Ico s={6}><path d="M0 1h6L3 5z" fill="currentColor" stroke="none" /></Ico>
              </span>
            </div>
          </div>
          <div className="mt-[3px] flex gap-2 text-black">
            <button className={BTN}>添加</button>
            <button className={BTN}>修改</button>
          </div>
          <div className="mt-[3px] min-h-0 flex-1 border border-[#d4d4d4] bg-white px-1 pt-[6px] text-black">
            <Group title="Horizontal" rows={["38.845 mm", "85.107 mm"]} />
            <Group title="Vertical" rows={["-99.368 mm", "-0.460 mm", "50.604 mm"]} selected="50.604 mm" />
          </div>
          <div className="flex h-8 shrink-0 items-center justify-end gap-[13px] pr-1 text-black">
            <button aria-label="锁定"><IcLock /></button>
            <button aria-label="删除辅助线"><IcTrash /></button>
          </div>
        </div>
        <div className="flex w-[21px] shrink-0 flex-col items-center border-l border-[#00a0f0] bg-[#e9e9e9]">
          <button className="flex h-[100px] w-full flex-col items-center gap-[5px] bg-[#d6d6d6] pt-1">
            <Ico className="text-[#444]"><path d="M1.500 4.500L5 1l7 2l3.500 5L11 13.500l-3-.5l-6.500-6.500zM4 2l4.500 4L8 13M5 1l5.500 5.500M12 3l-3.500 3M15 8.500l-5-2" /></Ico>
            <span className="leading-5 [text-orientation:sideways] [writing-mode:vertical-rl]">对象样式</span>
          </button>
          <button className="flex h-[88px] w-full flex-col items-center gap-[5px] bg-[#cfe3ff] pt-1">
            <span className="text-[#333]"><IcSnapGuides /></span>
            <span className="leading-5 [text-orientation:sideways] [writing-mode:vertical-rl]">辅助线</span>
          </button>
          <TB label="添加泊坞窗"><Plus /></TB>
        </div>
      </div>
    </aside>
  );
}

/* ---------- colour palettes ---------- */

const PALETTE = [
  "bg-[#231815]", "bg-[#3e3635]", "bg-[#595757]", "bg-[#727171]", "bg-[#898989]", "bg-[#9fa0a0]", "bg-[#b4b5b5]",
  "bg-[#c9caca]", "bg-[#dcdddd]", "bg-[#efefef]", "bg-[#ffffff]", "bg-[#1d2088]", "bg-[#00a0e9]", "bg-[#009944]",
  "bg-[#fff100]", "bg-[#e60012]", "bg-[#e4007f]", "bg-[#ae3f82]", "bg-[#f08300]", "bg-[#f3b1b2]", "bg-[#857469]",
  "bg-[#cfcbe4]", "bg-[#a59aca]", "bg-[#6f8cc7]", "bg-[#796baf]", "bg-[#8e86b0]", "bg-[#4e628e]", "bg-[#57506e]",
  "bg-[#7086a1]", "bg-[#008cd9]", "bg-[#9fd9f6]", "bg-[#b6cbd8]", "bg-[#96a8b1]", "bg-[#707f87]", "bg-[#495058]",
  "bg-[#547371]", "bg-[#448a7a]", "bg-[#729896]", "bg-[#56a897]", "bg-[#5aa571]", "bg-[#5bc0cf]", "bg-[#4da7b4]",
  "bg-[#b7cabb]", "bg-[#d4ead7]", "bg-[#a4d5ad]",
];

function Palette({ colors, dim }: { colors: string[]; dim?: boolean }) {
  return (
    <aside className="flex w-[21px] shrink-0 flex-col items-center border-l border-[#cfcfcf] text-[#666]">
      <div className="mt-[2px] h-[5px] w-4 shrink-0 bg-[radial-gradient(circle,#b4b4b4_1px,transparent_1px)] bg-[size:3px_3px]" />
      <button aria-label="调色板菜单" className="mt-[6px]"><Tri /></button>
      <button aria-label="滴管" className={`mt-[10px] ${dim ? "text-[#b8b8b8]" : "text-[#333]"}`}>
        <IcSmallDropper tip={dim ? "#b8b8b8" : "#f07020"} />
      </button>
      <button aria-label="向上" className="my-[7px] shrink-0 text-[#d0d0d0]"><Chevron d={UP} /></button>
      <div className={`flex min-h-0 flex-col gap-px overflow-hidden border border-[#555] bg-[#555] ${colors.length ? "border-b-0" : ""}`}>
        <button aria-label="无颜色" className="shrink-0"><NoColor /></button>
        {colors.map((c) => (
          <button key={c} aria-label="色样" className={`size-4 shrink-0 ${c}`} />
        ))}
      </div>
      <div className="mt-auto flex h-[41px] shrink-0 flex-col items-center gap-3 pt-1 text-[#b8b8b8]">
        <Chevron d={DOWN} />
        <Ico s={8}><path d="M1 1l3 3l-3 3M4.500 1l3 3l-3 3" /></Ico>
      </div>
    </aside>
  );
}

/* ---------- status bar ---------- */

function StatusBar() {
  return (
    <footer className="flex h-[26px] shrink-0 items-start overflow-hidden border-t border-[#cfcfcf] pl-[11px] pt-[7px] text-black">
      <div className="flex h-5 w-full items-center whitespace-pre">
        <span className="mr-[9px] text-[#333]"><IcGear /></span>
        <p className="w-[877px] shrink-0">
          <Mixed text="单击对象两次可旋转/倾斜；双击工具可选择所有对象；按住 Shift 键单击可选择多个对象；按住 Alt 键单击可进行挖掘；按住 Ctrl 并单击可在组中选择" />
        </p>
        <p>導線 于 辅助线</p>
        <div className="ml-auto flex h-full items-center text-[#333]">
          <IcBucket />
          <svg width="22" height="20" viewBox="0 0 22 20" className="ml-[3px] border border-[#a8a8a8] bg-white" aria-hidden="true"><path d="M2 19L20 1" stroke="#d01020" strokeWidth="2" /></svg>
          <span className="ml-1 w-[156px] text-black">无</span>
          <IcPen />
          <span className="ml-[2px] h-full w-5 border border-[#a8a8a8] bg-[#0000ff]" />
          <span className="ml-[5px] w-[205px] text-[11px] text-black">R:   0 G:   0 B:   255 (#0000...</span>
          <span className="mr-[11px] w-px self-stretch bg-[#cfcfcf]" />
          <svg width="16" height="16" viewBox="0 0 16 16" className="mr-[11px]" aria-hidden="true">
            <path d="M0 0h16v16H0z" fill="#333" /><path d="M2 2h12v6H2z" fill="#e82020" /><path d="M2 8h12v6H2z" fill="#20a0f0" /><circle cx="8" cy="8" r="3.500" fill="#eee" /><circle cx="8" cy="8" r="1.500" fill="#e82020" />
          </svg>
        </div>
      </div>
    </footer>
  );
}

function Watermark() {
  return (
    <div className="pointer-events-none absolute bottom-[6px] right-2 flex items-center gap-[3px] opacity-75">
      <svg width="42" height="44" viewBox="0 0 42 44" aria-hidden="true">
        <defs>
          <linearGradient id="wmA" x1="0" y1="1" x2="1" y2="0"><stop offset="0" stopColor="#1f6fc8" /><stop offset="1" stopColor="#52c0f0" /></linearGradient>
          <linearGradient id="wmB" x1="0" y1="1" x2="1" y2="0"><stop offset="0" stopColor="#e8d840" /><stop offset="1" stopColor="#2fae62" /></linearGradient>
        </defs>
        <path d="M40 2C18 0 2 14 1 30C4 36 8 36 10 35C6 22 18 6 40 2z" fill="url(#wmA)" />
        <path d="M30 14C44 22 36 42 8 41C24 38 34 28 26 17z" fill="url(#wmB)" />
        <path d="M8 30C6 18 22 12 26 18C29 24 20 33 12 30C20 29 24 24 21 21C17 18 10 23 8 30z" fill="url(#wmA)" />
      </svg>
      <div>
        <p className="text-[21px] font-bold leading-6 text-[#2d7cc8]">极光下载站</p>
        <p className="font-['Liberation_Sans',sans-serif] text-[19px] leading-5 text-[#3fae48]">www.xz7.com</p>
      </div>
    </div>
  );
}

export default function App() {
  return (
    <div className="relative flex h-screen flex-col overflow-hidden bg-[#f3f3f3] font-['Open_Sans','Noto_Sans_CJK_SC',sans-serif] text-[13px] leading-4 text-black">
      <TitleBar />
      <MenuBar />
      <Toolbar />
      <PropertyBar />
      <div className="flex min-h-0 flex-1">
        <Toolbox />
        <DocumentWindow />
        <Docker />
        <Palette colors={PALETTE} dim />
        <Palette colors={[]} />
      </div>
      <StatusBar />
      <Watermark />
    </div>
  );
}
